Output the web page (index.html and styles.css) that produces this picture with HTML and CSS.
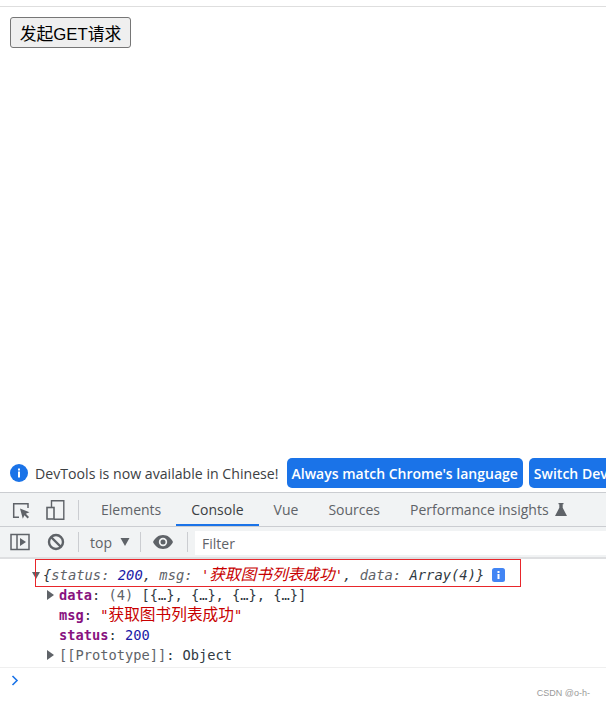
FILE: index.html
```html
<!DOCTYPE html>
<html lang="zh">
<head>
<meta charset="utf-8">
<title>GET</title>
<link rel="stylesheet" href="styles.css">
</head>
<body>
<div class="topline"></div>
<main class="page"><button class="get-btn">发起GET请求</button></main>
<section class="devtools">
  <div class="infobar">
    <svg class="info-ic" width="18" height="18" viewBox="0 0 18 18"><circle cx="9" cy="9" r="9" fill="#1a73e8"/><rect x="8" y="7.500" width="2" height="6" fill="#fff"/><rect x="8" y="4.500" width="2" height="2" fill="#fff"/></svg>
    <span class="info-text">DevTools is now available in Chinese!</span>
    <span class="pill">Always match Chrome's language</span>
    <span class="pill">Switch DevTools to Chinese</span>
  </div>
  <div class="tabbar">
    <span class="tool-ic first">
      <svg width="20" height="20" viewBox="0 0 20 20" fill="none"><path d="M8 17.200H2.700V3.700H17V8" stroke="#5f6368" stroke-width="1.500"/><path d="M9 8.500l9.500 3.700-3.700 1.600 3.200 3.200-1.400 1.400-3.200-3.200-1.600 3.500z" fill="#5f6368"/></svg>
    </span>
    <span class="tool-ic">
      <svg width="20" height="20" viewBox="0 0 20 20" fill="none"><path d="M6.500 7V.700h12.300v18.600H9" stroke="#5f6368" stroke-width="1.400"/><rect x="2" y="7.500" width="7" height="11.500" stroke="#5f6368" stroke-width="1.600"/></svg>
    </span>
    <span class="sep"></span>
    <span class="tab">Elements</span>
    <span class="tab active">Console</span>
    <span class="tab">Vue</span>
    <span class="tab">Sources</span>
    <span class="tab">Performance insights
      <svg class="flask" width="12" height="13" viewBox="0 0 12 13"><path d="M3.500 0h5v1.200H7.700v3.600L12 13H0L4.300 4.800V1.200H3.500z" fill="#5f6368"/></svg>
    </span>
  </div>
  <div class="consolebar">
    <svg class="c-ic" width="20" height="18" viewBox="0 0 20 18" fill="none"><rect x="1" y="1.500" width="18" height="15" stroke="#5f6368" stroke-width="1.500"/><path d="M7 1.500v15" stroke="#5f6368" stroke-width="1.500"/><path d="M10 5l6 4-6 4z" fill="#5f6368"/></svg>
    <svg class="c-ic2" width="18" height="18" viewBox="0 0 18 18" fill="none"><circle cx="9" cy="9" r="7" stroke="#5f6368" stroke-width="2.400"/><path d="M4 4l10 10" stroke="#5f6368" stroke-width="2.400"/></svg>
    <span class="sep s1"></span>
    <span class="top">top</span>
    <svg class="caret" width="10" height="8" viewBox="0 0 10 8"><path d="M0.500 0h9L5 8z" fill="#5f6368"/></svg>
    <span class="sep s2"></span>
    <svg class="eye" width="20" height="14" viewBox="0 0 20 14"><path d="M10 0C5.500 0 2 2.800 0 7c2 4.200 5.500 7 10 7s8-2.800 10-7c-2-4.200-5.500-7-10-7z" fill="#5f6368"/><circle cx="10" cy="7" r="4.200" fill="#f1f3f4"/><circle cx="10" cy="7" r="2.500" fill="#5f6368"/></svg>
    <span class="sep s3"></span>
    <div class="filter">Filter</div>
  </div>
  <div class="log">
    <div class="entry">
      <span class="tri down"></span><i class="summary">{<span class="k">status</span><span class="k">:</span> <span class="num">200</span><span class="p">,</span> <span class="k">msg</span><span class="k">:</span> <span class="str">'<span class="cjk">获取图书列表成功</span>'</span><span class="p">,</span> <span class="k">data</span><span class="k">:</span> <span class="p">Array(4)}</span></i>
      <svg class="i-badge" width="13" height="14" viewBox="0 0 13 14"><rect width="13" height="14" rx="2.500" fill="#4285f4"/><rect x="5.500" y="6" width="2" height="5" fill="#fff"/><rect x="5.500" y="3" width="2" height="2" fill="#fff"/></svg>
      <span class="redbox"></span>
    </div>
    <div class="row"><span class="tri right"></span><span class="key">data</span><span class="p">:</span> <span class="grey">(4)</span> <span class="p">[{…}, {…}, {…}, {…}]</span></div>
    <div class="row"><span class="key">msg</span><span class="p">:</span> <span class="str">"<span class="cjk">获取图书列表成功</span>"</span></div>
    <div class="row"><span class="key">status</span><span class="p">:</span> <span class="num">200</span></div>
    <div class="row"><span class="tri right"></span><span class="grey">[[Prototype]]</span><span class="p">: Object</span></div>
  </div>
  <div class="prompt">
    <svg width="8" height="11" viewBox="0 0 8 11" fill="none"><path d="M1.500 1l4.500 4.500L1.500 10" stroke="#1a73e8" stroke-width="1.600"/></svg>
    <span class="mark">CSDN @o-h-</span>
  </div>
</section>
</body>
</html>
```
FILE: styles.css
```css
html, body { margin: 0; padding: 0; }
body {
  width: 606px; height: 705px; overflow: hidden; background: #fff;
  display: flex; flex-direction: column;
  font-family: "Liberation Sans", "Noto Sans CJK SC", sans-serif;
}
.topline { height: 1px; margin-top: 6px; background: #dedede; flex: none; }
.page { flex: 1; padding: 10px 10px 0; }
.get-btn {
  display: block; width: 121px; height: 31px; padding: 0;
  border: 1px solid #767676; border-radius: 3px; background: #efefef; color: #000;
  font: 16.800px "Liberation Sans", "Noto Sans CJK SC", sans-serif;
}
.devtools { flex: none; font-family: "Open Sans", "Noto Sans", sans-serif; }
.infobar {
  height: 35px; box-sizing: border-box; display: flex; align-items: center; padding: 0 0 4px 10px;
  overflow: hidden; white-space: nowrap; font-size: 14.150px; color: #3c4043;
}
.info-ic { flex: none; margin-right: 7px; }
.info-text { margin-right: 8px; padding-top: 2px; }
.pill {
  flex: none; height: 30px; line-height: 32px; padding: 0 5px; margin-right: 6px;
  background: #1a73e8; color: #fff; font-weight: 600; border-radius: 5px; font-size: 14px;
}
.tabbar {
  height: 35px; display: flex; align-items: center; box-sizing: border-box;
  background: #f1f3f4; border-top: 1px solid #cbcdd1; border-bottom: 1px solid #cbcdd1;
  white-space: nowrap; overflow: hidden; font-size: 14px; color: #5f6368;
}
.tool-ic { width: 20px; height: 20px; flex: none; display: block; margin-left: 14px; }
.tool-ic.first { margin-left: 11px; }
.sep { width: 1px; height: 20px; background: #cbcdd1; flex: none; margin: 0 7px 0 13px; }
.tab { padding: 0 15px; height: 100%; box-sizing: border-box; display: flex; align-items: center; gap: 6px; }
.tab.active { color: #3c4043; border-bottom: 2px solid #1a73e8; padding-top: 2px; }
.consolebar {
  height: 32px; display: flex; align-items: center; box-sizing: border-box;
  background: #f1f3f4; border-bottom: 2px solid #dedfe1; font-size: 14px; color: #5f6368;
  padding-left: 10px;
}
.c-ic { flex: none; margin-right: 17px; }
.c-ic2 { flex: none; }
.sep.s1 { margin: 0 11px 0 13px; }
.sep.s2 { margin: 0 12px 0 10px; }
.sep.s3 { margin: 0 7px 0 14px; }
.top { width: 23px; margin-right: 7px; }
.caret { flex: none; }
.eye { flex: none; }
.filter {
  flex: 1; height: 24px; line-height: 26px; margin-top: 1px; background: #fff; padding-left: 7px; color: #5f6368;
}
.log { height: 108px; font: 13.700px/20px "DejaVu Sans Mono", "Noto Sans CJK SC", monospace; color: #202124; }
.entry { position: relative; height: 26px; padding: 6px 0 0 32px; display: flex; align-items: center; box-sizing: border-box; }
.summary { font-style: italic; white-space: pre; font-size: 13.800px; color: #303942; margin-left: 3px; }
.k { color: #5f6368; }
.p { color: #303942; }
.num { color: #1a1aa6; }
.str { color: #c80000; }
.cjk { font-size: 15.700px; line-height: 1; }
.i-badge { margin-left: 8px; flex: none; }
.redbox { position: absolute; left: 35px; top: 0; width: 486px; height: 28px; box-sizing: border-box; border: 1px solid #e8262b; }
.row { height: 20px; padding-left: 59px; position: relative; white-space: pre; }
.key { color: #881280; font-weight: 700; }
.grey { color: #5f6368; }
.tri { display: inline-block; width: 0; height: 0; }
.tri.right { position: absolute; left: 47px; top: 5px; border-left: 7px solid #5f6368; border-top: 5px solid transparent; border-bottom: 5px solid transparent; }
.tri.down { border-top: 7px solid #5f6368; border-left: 4.500px solid transparent; border-right: 4.500px solid transparent; }
.prompt { height: 38px; border-top: 1px solid #efefef; box-sizing: border-box; padding: 7px 0 0 11px; position: relative; }
.prompt svg { display: block; }
.mark { position: absolute; right: 16px; bottom: 7px; font: 9px "Liberation Sans", sans-serif; color: #9a9a9a; }
```
